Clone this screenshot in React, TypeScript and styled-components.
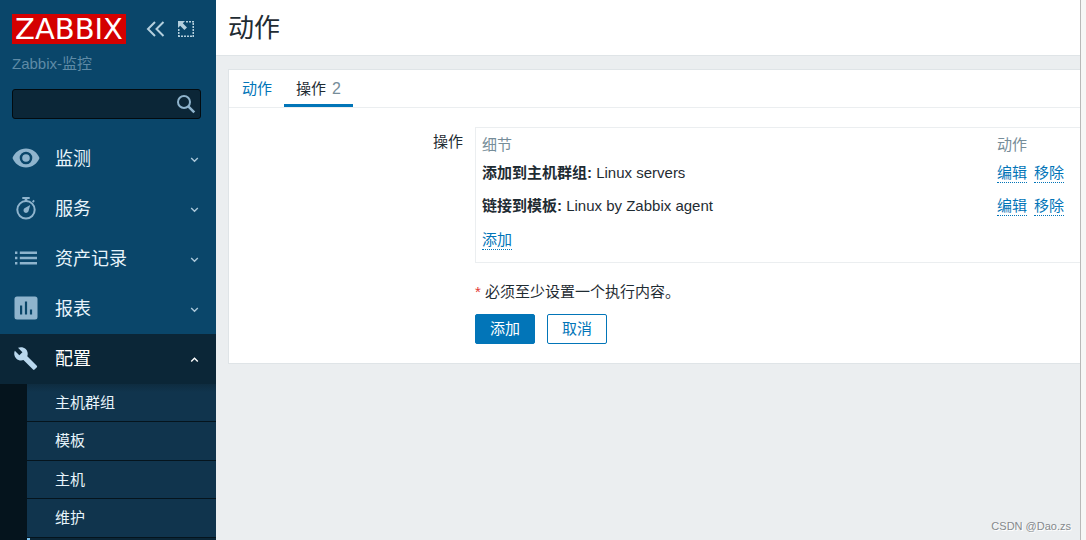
import React from "react";
import styled, { createGlobalStyle, css } from "styled-components";

const GlobalStyle = createGlobalStyle`
  * { box-sizing: border-box; }
  body {
    margin: 0;
    font: 15px/20px "Liberation Sans", Arial, "Noto Sans CJK SC", sans-serif;
    color: #1f2c33;
    background: #ebeef0;
  }
  button, input { font: inherit; }
`;

const Page = styled.div`
  display: grid;
  grid-template-columns: 216px minmax(0, 1fr) 6px;
  height: 100vh;
  overflow: hidden;
`;

const Sidebar = styled.aside`
  display: flex;
  flex-direction: column;
  overflow: hidden;
  background: #0a466a;
  > * {
    flex: none;
  }
`;

const SidebarHeader = styled.div`
  display: flex;
  align-items: center;
  padding: 14px 20px 0 12px;
`;

const Logo = styled.a`
  display: flex;
  align-items: center;
  justify-content: center;
  width: 114px;
  height: 30px;
  background: #d40000;
  color: #fff;
  font: 29px/30px "DejaVu Sans", sans-serif;
  text-decoration: none;
`;

const IconButton = styled.button`
  display: flex;
  align-items: center;
  justify-content: center;
  padding: 0;
  border: 0;
  background: none;
  color: #b4cfdd;
  cursor: pointer;
`;

const HeaderTools = styled.div`
  display: flex;
  gap: 12px;
  margin-left: 19px;
`;

const ServerName = styled.div`
  padding: 10px 12px 0;
  color: #5f8ba6;
`;

const SearchForm = styled.form`
  display: flex;
  align-items: center;
  height: 30px;
  margin: 15px 15px 15px 12px;
  padding-right: 4px;
  border: 1px solid #020b10;
  border-radius: 3px;
  background: #0b2637;
`;

const SearchInput = styled.input`
  flex: 1;
  min-width: 0;
  padding: 0 8px;
  border: 0;
  outline: 0;
  background: none;
  color: #fff;
`;

const MenuButton = styled.button<{ $open?: boolean }>`
  display: flex;
  align-items: center;
  width: 100%;
  height: 50px;
  padding: 0 17px 0 12px;
  border: 0;
  background: ${(p) => (p.$open ? "#0b2637" : "none")};
  color: ${(p) => (p.$open ? "#fff" : "#e8f4fb")};
  font-size: 18px;
  text-align: left;
  cursor: pointer;
  > svg:first-child {
    margin-bottom: 2px;
    color: ${(p) => (p.$open ? "#b9d8ee" : "#8fb4cd")};
  }
`;

const MenuText = styled.span`
  flex: 1;
  padding-left: 15px;
`;

const SubMenu = styled.ul`
  margin: 0;
  padding: 0 0 0 27px;
  list-style: none;
  background: #05141d;
`;

const SubItem = styled.li`
  height: 38px;
  border-bottom: 1px solid #05141d;
  background: #10344d;
  &:first-child {
    background: linear-gradient(#0e2c40, #10344d 8px);
  }
  &:nth-child(even) {
    height: 39px;
  }
`;

const SubLink = styled.a<{ $selected?: boolean }>`
  display: flex;
  align-items: center;
  height: 100%;
  padding-left: 28px;
  color: #e8f4fb;
  text-decoration: none;
  ${(p) =>
    p.$selected &&
    css`
      padding-left: 25px;
      border-left: 3px solid #7dc4f0;
      background: #0b2637;
    `}
`;

const Main = styled.main`
  display: flex;
  flex-direction: column;
  position: relative;
  overflow: hidden;
`;

const PageHeader = styled.header`
  padding: 8px 12px 7px;
  border-bottom: 1px solid #dfe4e7;
  background: #fff;
`;

const Title = styled.h1`
  margin: 0;
  font-size: 26px;
  line-height: 40px;
  font-weight: 400;
`;

const Card = styled.section`
  margin: 13px 0 0 12px;
  border: 1px solid #dfe4e7;
  border-right: 0;
  background: #fff;
`;

const Tabs = styled.nav`
  display: flex;
  padding-left: 1px;
  border-bottom: 1px solid #ebeef0;
`;

const Tab = styled.a<{ $active?: boolean }>`
  padding: 9px 12px 5px;
  border-bottom: 3px solid ${(p) => (p.$active ? "#0275b8" : "transparent")};
  color: ${(p) => (p.$active ? "#1f2c33" : "#0275b8")};
  text-decoration: none;
`;

const Count = styled.span`
  margin-left: 6px;
  color: #768d99;
  font-size: 16px;
`;

const Form = styled.form`
  display: grid;
  grid-template-columns: 234px minmax(0, 1fr);
  column-gap: 12px;
  padding: 19px 0;
`;

const FormLabel = styled.div`
  padding-top: 5px;
  text-align: right;
`;

const TableFrame = styled.div`
  padding: 6px 0 7px 6px;
  border: 1px solid #ebeef0;
  border-right: 0;
`;

const Table = styled.table`
  width: 100%;
  border-collapse: collapse;
  table-layout: fixed;
  th,
  td {
    height: 33px;
    padding: 0;
    text-align: left;
    vertical-align: middle;
  }
  th {
    height: 22px;
    color: #768d99;
    font-weight: 400;
  }
  th:last-child {
    width: 83px;
  }
  tr:last-child td {
    padding-top: 2px;
  }
`;

const LinkButton = styled.button`
  height: 20px;
  margin-right: 7px;
  padding: 0;
  border: 0;
  border-bottom: 1px dotted #0275b8;
  background: none;
  color: #0275b8;
  line-height: 19px;
  cursor: pointer;
`;

const Footer = styled.div`
  grid-column: 2;
  padding-top: 19px;
`;

const Asterisk = styled.span`
  color: #e33734;
`;

const Buttons = styled.div`
  display: flex;
  gap: 12px;
  margin-top: 12px;
`;

const Button = styled.button<{ $primary?: boolean }>`
  width: 60px;
  height: 30px;
  padding: 0;
  border: 1px solid #0275b8;
  border-radius: 2px;
  background: ${(p) => (p.$primary ? "#0275b8" : "#fff")};
  color: ${(p) => (p.$primary ? "#fff" : "#0275b8")};
  cursor: pointer;
`;

const Credit = styled.small`
  position: absolute;
  right: 9px;
  bottom: 4px;
  color: #85898c;
  font-size: 11px;
  text-shadow: 1px 1px 0 #fff;
`;

const Gutter = styled.div`
  border-left: 1px solid #b8b8b8;
  background: #f6f6f6;
`;

const Chevron = ({ up }: { up?: boolean }) => (
  <svg width="9" height="8" viewBox="0 0 9 8" fill="none" stroke={up ? "#fff" : "#a9c6d8"} strokeWidth="1.4">
    <path d={up ? "M1.200 6.500l3.300-3.300 3.300 3.300" : "M1.200 3l3.300 3.300L7.800 3"} />
  </svg>
);

const icons = {
  eye: (
    <path
      fillRule="evenodd"
      d="M14 4.5C7.8 4.5 2.600 8.400.500 14 2.600 19.600 7.800 23.500 14 23.500S25.400 19.600 27.500 14C25.400 8.400 20.200 4.500 14 4.500zM14 20.300a6.300 6.300 0 1 1 0-12.600 6.300 6.300 0 0 1 0 12.600zM14 10.200a3.800 3.800 0 1 0 0 7.600 3.800 3.800 0 0 0 0-7.600z"
    />
  ),
  watch: (
    <>
      <circle cx="14" cy="15.800" r="8.700" fill="none" stroke="currentColor" strokeWidth="2" />
      <path d="M10.300 3h7.400v2h-2.400v2h-2.600V5h-2.400zM20 7.400l1.400-1.600 1.400 1.200-1.400 1.700zM18.200 11l-1.700 6.300a2.600 2.600 0 1 1-3.600-3.300z" />
    </>
  ),
  list: (
    <path d="M3 7.500h2.400V10H3zM7.800 7.500H25V10H7.800zM3 12.700h2.400v2.500H3zM7.800 12.700H25v2.500H7.800zM3 18h2.400v2.500H3zM7.800 18H25v2.500H7.800z" />
  ),
  chart: (
    <path
      fillRule="evenodd"
      d="M5 2.500h18A2.500 2.500 0 0 1 25.500 5v18a2.500 2.500 0 0 1-2.500 2.500H5A2.500 2.500 0 0 1 2.500 23V5A2.500 2.500 0 0 1 5 2.500zM8 11.500v9h2.200v-9zM12.900 7.500v13h2.200v-13zM17.900 15.500v5h2.200v-5z"
    />
  ),
  wrench: (
    <g transform="translate(1.300 1.500) scale(.94)">
      <path d="M25 21.600 14.900 11.500c1-2.600.400-5.600-1.700-7.700C11 1.600 7.700 1.200 5 2.400l4.700 4.700-3.300 3.300L1.600 5.700c-1.200 2.600-.700 5.900 1.500 8.100 2.100 2.100 5.100 2.700 7.700 1.700L21 25.600a1.200 1.200 0 0 0 1.600 0l2.500-2.500a1.100 1.100 0 0 0-.100-1.500z" />
    </g>
  ),
};

const Icon = ({ name }: { name: keyof typeof icons }) => (
  <svg width="28" height="28" viewBox="0 0 28 28" fill="currentColor" aria-hidden="true">
    {icons[name]}
  </svg>
);

const menu: { icon: keyof typeof icons; text: string; open?: boolean }[] = [
  { icon: "eye", text: "监测" },
  { icon: "watch", text: "服务" },
  { icon: "list", text: "资产记录" },
  { icon: "chart", text: "报表" },
  { icon: "wrench", text: "配置", open: true },
];

const subMenu = ["主机群组", "模板", "主机", "维护", "动作"];

const operations = [
  { kind: "添加到主机群组:", value: "Linux servers" },
  { kind: "链接到模板:", value: "Linux by Zabbix agent" },
];

export default function App() {
  return (
    <>
      <GlobalStyle />
      <Page>
        <Sidebar>
          <SidebarHeader>
            <Logo href="#">ZABBIX</Logo>
            <HeaderTools>
              <IconButton type="button" aria-label="收起">
                <svg width="20" height="18" viewBox="0 0 20 18" fill="none" stroke="currentColor" strokeWidth="2">
                  <path d="M10 2 3 9l7 7M18.500 2l-7 7 7 7" />
                </svg>
              </IconButton>
              <IconButton type="button" aria-label="隐藏">
                <svg width="18" height="18" viewBox="0 0 18 18" fill="none" stroke="currentColor">
                  <path strokeWidth="1.500" strokeDasharray="2 1" d="M9 1.750h8M16.250 3v14M1 16.250h15M1.750 9v7" />
                  <path d="M1 1h7L5.800 3.200 10 7.400 7.400 10 3.200 5.800 1 8z" fill="currentColor" stroke="none" />
                </svg>
              </IconButton>
            </HeaderTools>
          </SidebarHeader>
          <ServerName>Zabbix-监控</ServerName>
          <SearchForm role="search">
            <SearchInput type="text" aria-label="搜索" />
            <IconButton type="button" aria-label="搜索">
              <svg width="20" height="20" viewBox="0 0 20 20" fill="none" stroke="#8fb4cd">
                <circle cx="8" cy="8" r="6" strokeWidth="2" />
                <path d="M12.300 12.300 18.300 18.300" strokeWidth="2.600" />
              </svg>
            </IconButton>
          </SearchForm>
          {menu.map((m) => (
            <MenuButton key={m.text} type="button" $open={m.open} aria-expanded={!!m.open}>
              <Icon name={m.icon} />
              <MenuText>{m.text}</MenuText>
              <Chevron up={m.open} />
            </MenuButton>
          ))}
          <SubMenu>
            {subMenu.map((text, i) => (
              <SubItem key={text}>
                <SubLink href="#" $selected={i === 4}>
                  {text}
                </SubLink>
              </SubItem>
            ))}
          </SubMenu>
        </Sidebar>
        <Main>
          <PageHeader>
            <Title>动作</Title>
          </PageHeader>
          <Card>
            <Tabs>
              <Tab href="#">动作</Tab>
              <Tab href="#" $active>
                操作<Count>2</Count>
              </Tab>
            </Tabs>
            <Form>
              <FormLabel id="operations">操作</FormLabel>
              <TableFrame>
                <Table aria-labelledby="operations">
                  <thead>
                    <tr>
                      <th>细节</th>
                      <th>动作</th>
                    </tr>
                  </thead>
                  <tbody>
                    {operations.map((op) => (
                      <tr key={op.kind}>
                        <td>
                          <b>{op.kind}</b> {op.value}
                        </td>
                        <td>
                          <LinkButton type="button">编辑</LinkButton>
                          <LinkButton type="button">移除</LinkButton>
                        </td>
                      </tr>
                    ))}
                    <tr>
                      <td colSpan={2}>
                        <LinkButton type="button">添加</LinkButton>
                      </td>
                    </tr>
                  </tbody>
                </Table>
              </TableFrame>
              <Footer>
                <Asterisk>*</Asterisk> 必须至少设置一个执行内容。
                <Buttons>
                  <Button type="button" $primary>
                    添加
                  </Button>
                  <Button type="button">取消</Button>
                </Buttons>
              </Footer>
            </Form>
          </Card>
          <Credit>CSDN @Dao.zs</Credit>
        </Main>
        <Gutter />
      </Page>
    </>
  );
}
